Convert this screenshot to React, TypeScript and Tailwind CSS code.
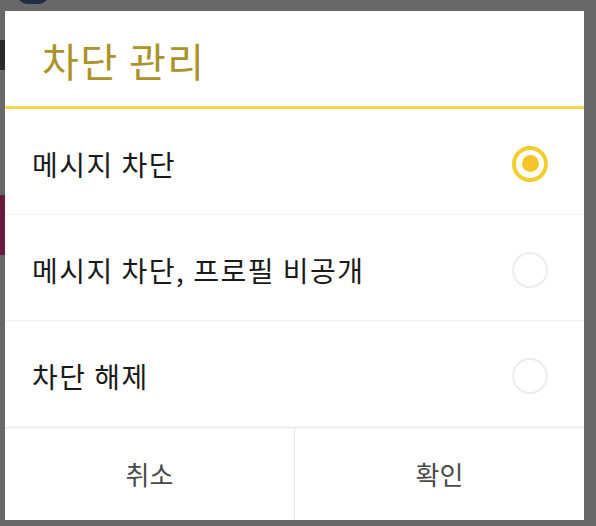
import React from "react";

const font = { fontFamily: '"Noto Sans CJK KR", "Noto Sans", sans-serif' };

function Radio({ checked }: { checked: boolean }) {
  if (checked) {
    return (
      <div className="w-[36px] h-[36px] rounded-full border-[4px] border-[#f3cd2c] flex items-center justify-center">
        <div className="w-[17px] h-[17px] rounded-full bg-[#f3c52a]" />
      </div>
    );
  }
  return <div className="w-[36px] h-[36px] rounded-full border-[2px] border-[#ececec]" />;
}

const options = ["메시지 차단", "메시지 차단, 프로필 비공개", "차단 해제"];

export default function App() {
  return (
    <div className="relative w-[596px] h-[526px] bg-[#686868] overflow-hidden" style={font}>
      <div className="absolute left-[18px] top-[-14px] w-[30px] h-[18px] rounded-full bg-[#1f2e44]" />
      <div className="absolute left-0 top-[195px] w-[6px] h-[60px] bg-[#6a1a3c]" />
      <div className="absolute left-0 top-[40px] w-[5px] h-[30px] bg-[#2a2a2a]" />
      <div className="relative pt-[11px] pl-[5px] pr-[12px]">
        <div className="w-[579px] h-[509px] bg-white flex flex-col">
          <div className="h-[95px] flex items-center pl-[37px] pt-[2px]">
            <span className="text-[40px] font-normal text-[#ab922a] leading-none tracking-[1.5px]">차단 관리</span>
          </div>
          <div className="h-[3px] bg-[#f2d84a]" />
          {options.map((o, i) => (
            <div
              key={o}
              className={`h-[106px] flex items-center justify-between pl-[27px] pr-[36px] pt-[4px] ${i < 2 ? "border-b border-[#f0f0f0]" : ""}`}
            >
              <span className="text-[28px] text-[#1a1a1a] leading-none tracking-[1.5px]">{o}</span>
              <Radio checked={i === 0} />
            </div>
          ))}
          <div className="flex-1 flex border-t border-[#e6e6e6]">
            <div className="flex-1 flex items-center justify-center border-r border-[#e6e6e6]">
              <span className="text-[26px] text-[#4a4a4a] leading-none">취소</span>
            </div>
            <div className="flex-1 flex items-center justify-center">
              <span className="text-[26px] text-[#4a4a4a] leading-none">확인</span>
            </div>
          </div>
        </div>
      </div>
    </div>
  );
}
